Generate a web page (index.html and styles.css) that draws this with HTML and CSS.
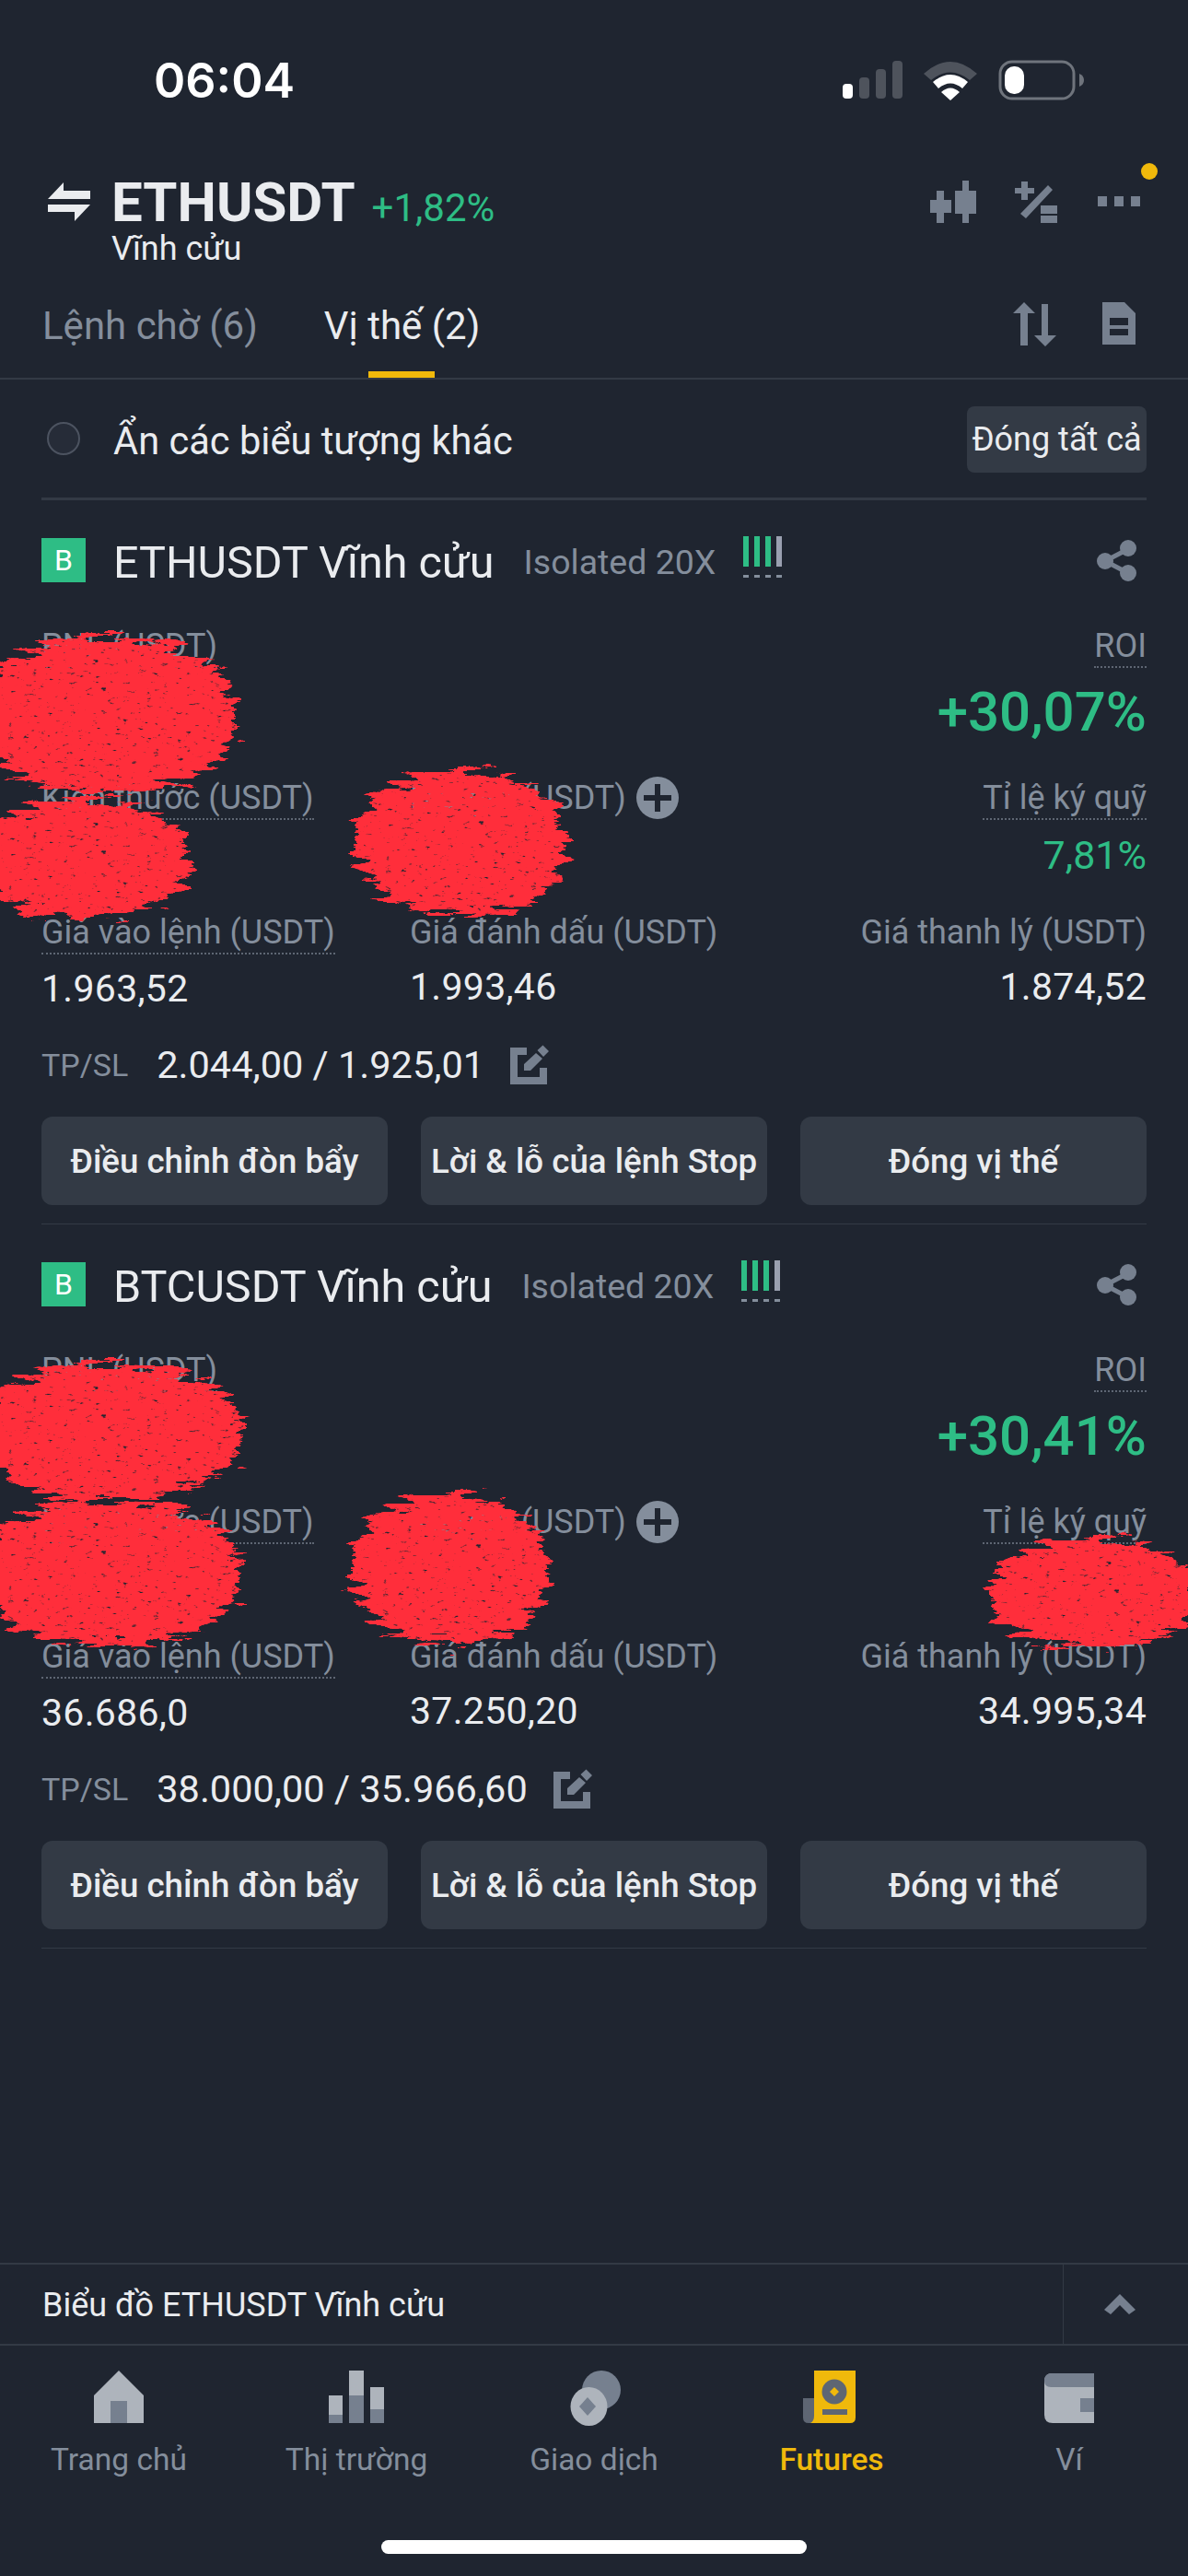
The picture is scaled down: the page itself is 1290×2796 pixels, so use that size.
FILE: index.html
```html
<!DOCTYPE html>
<html lang="vi">
<head>
  <meta charset="UTF-8">
  <title>ETHUSDT Vĩnh cửu</title>
  <link rel="stylesheet" href="styles.css">
</head>
<body>
  <svg class="defs" width="0" height="0">
    <filter id="scribble" x="-20%" y="-20%" width="140%" height="140%">
      <feTurbulence type="fractalNoise" baseFrequency="0.025 0.14" numOctaves="5" seed="7" result="warp"/>
      <feDisplacementMap in="SourceGraphic" in2="warp" scale="40" xChannelSelector="R" yChannelSelector="G" result="rough"/>
      <feTurbulence type="fractalNoise" baseFrequency="0.12 0.3" numOctaves="3" seed="3"/>
      <feColorMatrix type="matrix" values="0 0 0 0 0  0 0 0 0 0  0 0 0 0 0  6 0 0 0 -0.9"/>
      <feComposite in="rough" operator="in"/>
    </filter>
  </svg>

  <div class="phone">
    <div class="status-bar">
      <span class="clock">06:04</span>
      <div class="status-icons">
        <svg class="ic-signal" viewBox="0 0 65 41">
          <rect x="0" y="25" width="11" height="16" rx="4" fill="#fff"/>
          <rect x="18" y="18" width="11" height="23" rx="4" fill="#4e535c"/>
          <rect x="36" y="9" width="11" height="32" rx="4" fill="#4e535c"/>
          <rect x="54" y="0" width="11" height="41" rx="4" fill="#4e535c"/>
        </svg>
        <svg class="ic-wifi" viewBox="0 0 60 44">
          <path d="M1 15Q30 -11 59 15L51 22Q30 5 9 22Z" fill="#4e535c"/>
          <path d="M11 24Q30 8 49 24L43 31Q30 20 17 31Z" fill="#fff"/>
          <path d="M20 35Q30 26 40 35L30 44Z" fill="#fff"/>
        </svg>
        <svg class="ic-battery" viewBox="0 0 93 44">
          <rect x="2" y="2" width="80" height="40" rx="13" fill="none" stroke="#6f747c" stroke-width="3"/>
          <rect x="7" y="7" width="21" height="30" rx="10" fill="#fff"/>
          <path d="M88 15Q93 17 93 22Q93 27 88 29Z" fill="#6f747c"/>
        </svg>
      </div>
    </div>

    <header class="pair-bar">
      <svg class="ic-swap" viewBox="0 0 46 42">
        <path d="M0 18L17 0V9H46V18Z" fill="#eaecef"/>
        <path d="M0 24H46L29 42V32H0Z" fill="#eaecef"/>
      </svg>
      <div class="pair-name">
        <div class="pair-line">
          <span class="pair-symbol">ETHUSDT</span>
          <span class="pair-change">+1,82%</span>
        </div>
        <div class="pair-kind">Vĩnh cửu</div>
      </div>
      <div class="pair-tools">
        <svg class="tool-candle" viewBox="0 0 50 46">
          <path d="M0 21H7V11H15V21H23V35H15V46H7V35H0ZM27 11H35V0H42V11H50V36H42V46H35V36H27Z" fill="#76808f"/>
        </svg>
        <svg class="tool-percent" viewBox="0 0 46 46">
          <path d="M7 1H14V8H21V14H14V21H7V14H0V8H7ZM6 36L36 5L41 10L12 41ZM28 27H46V36H28ZM28 38H46V46H28Z" fill="#76808f"/>
        </svg>
        <div class="tool-more">
          <span></span><span></span><span></span>
          <i class="notice-dot"></i>
        </div>
      </div>
    </header>

    <nav class="tabs">
      <span class="tab">Lệnh chờ (6)</span>
      <span class="tab tab-active">Vị thế (2)</span>
      <div class="tab-tools">
        <svg class="tool-sort" viewBox="0 0 48 48">
          <path d="M12 0L24 12H16V47H8V12H0ZM31 2H38V36H47L35 48L23 36H31Z" fill="#76808f"/>
        </svg>
        <svg class="tool-doc" viewBox="0 0 36 46">
          <path d="M0 0H24L36 12V46H0ZM8 17V25H28V17ZM8 29V36H28V29Z" fill="#76808f" fill-rule="evenodd"/>
        </svg>
      </div>
    </nav>

    <div class="filter-row">
      <i class="radio"></i>
      <span class="filter-text">Ẩn các biểu tượng khác</span>
      <button class="close-all">Đóng tất cả</button>
    </div>

    <section class="position">
      <div class="pos-head">
        <span class="side-badge">B</span>
        <span class="pos-title">ETHUSDT Vĩnh cửu</span>
        <span class="pos-mode">Isolated 20X</span>
        <svg class="ic-risk" viewBox="0 0 43 46">
          <rect x="0" width="6" height="33" fill="#2ebd85"/>
          <rect x="12" width="6" height="33" fill="#2ebd85"/>
          <rect x="24" width="6" height="33" fill="#2ebd85"/>
          <rect x="36" width="6" height="33" fill="#9aa0b0"/>
          <path d="M0 42h6v3H0zM12 42h6v3h-6zM24 42h6v3h-6zM36 42h6v3h-6z" fill="#848e9c"/>
        </svg>
        <svg class="ic-share" viewBox="0 0 46 46">
          <path d="M35 10L10 23L35 36" fill="none" stroke="#76808f" stroke-width="5"/>
          <circle cx="35" cy="9" r="9" fill="#76808f"/>
          <circle cx="10" cy="23" r="9" fill="#76808f"/>
          <circle cx="35" cy="36" r="9" fill="#76808f"/>
        </svg>
      </div>

      <div class="metrics">
        <div class="metric row-a">
          <span class="label dotted">PNL (USDT)</span>
        </div>
        <div class="metric row-a"></div>
        <div class="metric row-a right">
          <span class="label dotted">ROI</span>
          <span class="roi">+30,07%</span>
        </div>

        <div class="metric row-b">
          <span class="label dotted">Kích thước (USDT)</span>
        </div>
        <div class="metric row-b">
          <span class="label-line">
            <span class="label">Margin (USDT)</span>
            <svg class="ic-plus" viewBox="0 0 46 46">
              <circle cx="23" cy="23" r="23" fill="#848e9c"/>
              <path d="M20 8h6v12h12v6H26v12h-6V26H8v-6h12z" fill="#1f2530"/>
            </svg>
          </span>
        </div>
        <div class="metric row-b right">
          <span class="label dotted">Tỉ lệ ký quỹ</span>
          <span class="ratio">7,81%</span>
        </div>

        <div class="metric row-c">
          <span class="label dotted">Giá vào lệnh (USDT)</span>
          <span class="value">1.963,52</span>
        </div>
        <div class="metric row-c">
          <span class="label">Giá đánh dấu (USDT)</span>
          <span class="value">1.993,46</span>
        </div>
        <div class="metric row-c right">
          <span class="label">Giá thanh lý (USDT)</span>
          <span class="value">1.874,52</span>
        </div>
      </div>

      <div class="tpsl">
        <span class="tpsl-label">TP/SL</span>
        <span class="tpsl-value">2.044,00 / 1.925,01</span>
        <svg class="ic-edit" viewBox="0 -3 42 44">
          <path d="M18 0H0V40H40V22H32V32H8V8H18ZM28 6L15 18V25H22L35 12ZM29.500 3L35.500 -2.500L42 4L36 10Z" fill="#76808f"/>
        </svg>
      </div>

      <div class="actions">
        <button>Điều chỉnh đòn bẩy</button>
        <button>Lời &amp; lỗ của lệnh Stop</button>
        <button>Đóng vị thế</button>
      </div>

      <div class="blob blob-a"></div>
      <div class="blob blob-b"></div>
      <div class="blob blob-c"></div>
    </section>

    <section class="position">
      <div class="pos-head">
        <span class="side-badge">B</span>
        <span class="pos-title">BTCUSDT Vĩnh cửu</span>
        <span class="pos-mode">Isolated 20X</span>
        <svg class="ic-risk" viewBox="0 0 43 46">
          <rect x="0" width="6" height="33" fill="#2ebd85"/>
          <rect x="12" width="6" height="33" fill="#2ebd85"/>
          <rect x="24" width="6" height="33" fill="#2ebd85"/>
          <rect x="36" width="6" height="33" fill="#9aa0b0"/>
          <path d="M0 42h6v3H0zM12 42h6v3h-6zM24 42h6v3h-6zM36 42h6v3h-6z" fill="#848e9c"/>
        </svg>
        <svg class="ic-share" viewBox="0 0 46 46">
          <path d="M35 10L10 23L35 36" fill="none" stroke="#76808f" stroke-width="5"/>
          <circle cx="35" cy="9" r="9" fill="#76808f"/>
          <circle cx="10" cy="23" r="9" fill="#76808f"/>
          <circle cx="35" cy="36" r="9" fill="#76808f"/>
        </svg>
      </div>

      <div class="metrics">
        <div class="metric row-a">
          <span class="label dotted">PNL (USDT)</span>
        </div>
        <div class="metric row-a"></div>
        <div class="metric row-a right">
          <span class="label dotted">ROI</span>
          <span class="roi">+30,41%</span>
        </div>

        <div class="metric row-b">
          <span class="label dotted">Kích thước (USDT)</span>
        </div>
        <div class="metric row-b">
          <span class="label-line">
            <span class="label">Margin (USDT)</span>
            <svg class="ic-plus" viewBox="0 0 46 46">
              <circle cx="23" cy="23" r="23" fill="#848e9c"/>
              <path d="M20 8h6v12h12v6H26v12h-6V26H8v-6h12z" fill="#1f2530"/>
            </svg>
          </span>
        </div>
        <div class="metric row-b right">
          <span class="label dotted">Tỉ lệ ký quỹ</span>
        </div>

        <div class="metric row-c">
          <span class="label dotted">Giá vào lệnh (USDT)</span>
          <span class="value">36.686,0</span>
        </div>
        <div class="metric row-c">
          <span class="label">Giá đánh dấu (USDT)</span>
          <span class="value">37.250,20</span>
        </div>
        <div class="metric row-c right">
          <span class="label">Giá thanh lý (USDT)</span>
          <span class="value">34.995,34</span>
        </div>
      </div>

      <div class="tpsl">
        <span class="tpsl-label">TP/SL</span>
        <span class="tpsl-value">38.000,00 / 35.966,60</span>
        <svg class="ic-edit" viewBox="0 -3 42 44">
          <path d="M18 0H0V40H40V22H32V32H8V8H18ZM28 6L15 18V25H22L35 12ZM29.500 3L35.500 -2.500L42 4L36 10Z" fill="#76808f"/>
        </svg>
      </div>

      <div class="actions">
        <button>Điều chỉnh đòn bẩy</button>
        <button>Lời &amp; lỗ của lệnh Stop</button>
        <button>Đóng vị thế</button>
      </div>

      <div class="blob blob-d"></div>
      <div class="blob blob-e"></div>
      <div class="blob blob-f"></div>
      <div class="blob blob-g"></div>
    </section>

    <div class="chart-bar">
      <span class="chart-title">Biểu đồ ETHUSDT Vĩnh cửu</span>
      <div class="chart-toggle">
        <svg class="ic-chevron" viewBox="0 0 36 22">
          <path d="M18 0L35 17L28 22L18 12L8 22L1 17Z" fill="#76808f"/>
        </svg>
      </div>
    </div>

    <nav class="bottom-nav">
      <div class="nav-item">
        <svg viewBox="0 0 78 60">
          <path d="M12 27L39 0L66 27V57H12Z" fill="#aeb4bc"/>
          <rect x="30" y="33" width="18" height="24" fill="#76808f"/>
        </svg>
        <span>Trang chủ</span>
      </div>
      <div class="nav-item">
        <svg viewBox="0 0 78 60">
          <rect x="9" y="27" width="15" height="21" fill="#aeb4bc"/>
          <rect x="9" y="48" width="15" height="9" fill="#76808f"/>
          <rect x="31" y="0" width="16" height="27" fill="#aeb4bc"/>
          <rect x="31" y="27" width="16" height="30" fill="#76808f"/>
          <rect x="54" y="18" width="15" height="24" fill="#aeb4bc"/>
          <rect x="54" y="42" width="15" height="15" fill="#76808f"/>
        </svg>
        <span>Thị trường</span>
      </div>
      <div class="nav-item">
        <svg viewBox="0 0 78 60">
          <circle cx="47" cy="21" r="21" fill="#76808f"/>
          <ellipse cx="33.500" cy="39" rx="20" ry="21" fill="#aeb4bc"/>
          <path d="M32 29L41 39L32 49L23 39Z" fill="#76808f"/>
        </svg>
        <span>Giao dịch</span>
      </div>
      <div class="nav-item nav-active">
        <svg viewBox="0 0 78 60">
          <path d="M8 30H20V57H14Q8 57 8 51Z" fill="#5e6673"/>
          <path d="M20 0H65V51Q65 57 59 57H16Q20 55 20 49Z" fill="#f0b90b"/>
          <circle cx="42" cy="23" r="13.500" fill="#5e6673"/>
          <path d="M42 18L47 23L42 28L37 23Z" fill="#f0b90b"/>
          <rect x="29" y="42" width="27" height="6" fill="#5e6673"/>
        </svg>
        <span>Futures</span>
      </div>
      <div class="nav-item">
        <svg viewBox="0 0 78 60">
          <path d="M12 12Q12 3 21 3H66V57H21Q12 57 12 48Z" fill="#aeb4bc"/>
          <path d="M12 11Q12 3 20 3H66V18H19Q12 18 12 11Z" fill="#76808f"/>
          <rect x="51" y="30" width="15" height="15" fill="#76808f"/>
        </svg>
        <span>Ví</span>
      </div>
    </nav>

    <div class="home-bar"><i></i></div>
  </div>
</body>
</html>
```

FILE: styles.css
```css
* {
  box-sizing: border-box;
}

html, body {
  margin: 0;
  padding: 0;
  background-color: #1f2530;
}

body {
  font-family: Roboto, "Noto Sans", sans-serif;
  color: #eaecef;
}

.defs {
  position: absolute;
}

.phone {
  width: 1290px;
  height: 2796px;
  display: flex;
  flex-direction: column;
  overflow: hidden;
}

svg {
  display: block;
  flex: none;
}

/* status bar */
.status-bar {
  height: 170px;
  display: flex;
  padding: 56px 113px 0 167px;
  justify-content: space-between;
}

.clock {
  font-family: Inter, sans-serif;
  font-size: 52px;
  line-height: 64px;
  font-weight: 600;
  color: #fff;
}

.status-icons {
  display: flex;
  gap: 22px;
  align-items: flex-start;
  padding-top: 9px;
}

.ic-signal {
  width: 65px;
  height: 41px;
  margin-top: 1px;
}

.ic-wifi {
  width: 60px;
  height: 44px;
}

.ic-battery {
  width: 93px;
  height: 44px;
}

/* pair header */
.pair-bar {
  height: 130px;
  display: flex;
  padding: 28px 52px 0 52px;
  align-items: flex-start;
  position: relative;
}

.ic-swap {
  width: 46px;
  height: 42px;
  margin-right: 23px;
}

.pair-name {
  flex: 1;
  margin-top: -9px;
}

.pair-line {
  display: flex;
  align-items: baseline;
  gap: 18px;
}

.pair-symbol {
  font-size: 60px;
  line-height: 61px;
  font-weight: 700;
}

.pair-change {
  font-size: 42px;
  line-height: 48px;
  color: #2ebd85;
}

.pair-kind {
  font-size: 36px;
  line-height: 40px;
}

.pair-tools {
  display: flex;
  margin-top: -2px;
}

.tool-candle, .tool-percent {
  width: 50px;
  height: 46px;
}

.tool-percent {
  width: 46px;
  margin-left: 42px;
}

.tool-more {
  width: 46px;
  height: 46px;
  display: flex;
  gap: 8px;
  margin-left: 44px;
  padding-top: 17px;
  position: relative;
}

.tool-more span {
  width: 10px;
  height: 11px;
  background-color: #76808f;
}

.notice-dot {
  position: absolute;
  top: -19px;
  right: -19px;
  width: 18px;
  height: 18px;
  border-radius: 50%;
  background-color: #f0b90b;
}

/* tabs */
.tabs {
  height: 112px;
  display: flex;
  padding: 0 57px 0 46px;
  border-bottom: 2px solid #333a45;
  gap: 72px;
}

.tab {
  font-size: 42px;
  line-height: 56px;
  padding-top: 26px;
  height: 110px;
  color: #848e9c;
  position: relative;
}

.tab-active {
  color: #eaecef;
}

.tab-active::after {
  content: "";
  position: absolute;
  left: 48px;
  bottom: 0;
  width: 72px;
  height: 7px;
  background-color: #f0b90b;
}

.tab-tools {
  margin-left: auto;
  display: flex;
  gap: 49px;
  padding-top: 28px;
}

.tool-sort {
  width: 48px;
  height: 48px;
}

.tool-doc {
  width: 36px;
  height: 46px;
}

/* filter row */
.filter-row {
  height: 131px;
  margin: 0 45px;
  display: flex;
  align-items: center;
  border-bottom: 3px solid #333a45;
}

.radio {
  width: 36px;
  height: 36px;
  margin-left: 6px;
  border-radius: 50%;
  border: 2px solid #4c5360;
  background-color: #262c38;
}

.filter-text {
  margin-left: 36px;
  flex: 1;
  font-size: 41.6px;
  padding-top: 4px;
}

.close-all {
  width: 195px;
  height: 72px;
  margin-top: 2px;
  padding: 0;
  border: none;
  border-radius: 8px;
  background-color: #333a45;
  color: #eaecef;
  font: inherit;
  font-size: 36px;
}

/* position card */
.position {
  height: 786px;
  margin: 0 45px;
  padding-bottom: 20px;
  border-bottom: 1px solid #333a45;
  position: relative;
  display: flex;
  flex-direction: column;
}

.pos-head {
  height: 130px;
  display: flex;
  align-items: center;
}

.side-badge {
  width: 48px;
  height: 48px;
  background-color: #2ebd85;
  color: #fff;
  font-size: 32px;
  line-height: 48px;
  text-align: center;
}

.pos-title {
  margin-left: 30px;
  margin-top: 4px;
  font-size: 48.500px;
}

.pos-mode {
  margin-left: 32px;
  margin-top: 4px;
  font-size: 37.500px;
  color: #848e9c;
}

.ic-risk {
  width: 43px;
  height: 46px;
  margin-left: 30px;
  margin-bottom: 6px;
}

.ic-share {
  width: 46px;
  height: 46px;
  margin-left: auto;
  margin-right: 9px;
  margin-top: 2px;
}

.metrics {
  display: grid;
  grid-template-columns: 400px 1fr auto;
  grid-template-rows: 167px 145px 130px;
}

.metric {
  display: flex;
  flex-direction: column;
  align-items: flex-start;
}

.metric.right {
  align-items: flex-end;
}

.row-a {
  padding-top: 6px;
}

.row-b {
  padding-top: 4px;
}

.row-c {
  padding-top: 5px;
}

.label {
  font-size: 36px;
  line-height: 44px;
  color: #848e9c;
}

.dotted {
  border-bottom: 2px dotted #5e6673;
}

.label-line {
  display: flex;
  align-items: center;
  gap: 11px;
  margin-top: -1px;
}

.ic-plus {
  width: 46px;
  height: 46px;
}

.roi {
  font-size: 60px;
  line-height: 70px;
  font-weight: 500;
  color: #2ebd85;
  margin-top: 13px;
}

.ratio {
  font-size: 43px;
  line-height: 48px;
  color: #2ebd85;
  margin-top: 14px;
}

.value {
  font-size: 41px;
  line-height: 48px;
  letter-spacing: 0.300px;
  margin-top: 13px;
}

.tpsl {
  height: 97px;
  display: flex;
  align-items: center;
  padding-bottom: 16px;
}

.tpsl-label {
  font-size: 34px;
  color: #848e9c;
}

.tpsl-value {
  margin-left: 31px;
  font-size: 41.500px;
}

.ic-edit {
  width: 42px;
  height: 44px;
  margin-left: 28px;
}

.actions {
  display: grid;
  grid-template-columns: repeat(3, 1fr);
  gap: 36px;
}

.actions button {
  height: 96px;
  padding: 0;
  border: none;
  border-radius: 12px;
  background-color: #333a45;
  color: #eaecef;
  font: inherit;
  font-size: 36.700px;
  font-weight: 500;
}

/* scribbles over the hidden numbers */
.blob {
  position: absolute;
  background-color: #ff2d3b;
  border-radius: 46%;
  filter: url(#scribble);
}

.blob-a { left: -70px; top: 150px; width: 280px; height: 168px; }
.blob-b { left: -70px; top: 327px; width: 232px; height: 125px; }
.blob-c { left: 340px; top: 295px; width: 230px; height: 155px; }
.blob-d { left: -70px; top: 153px; width: 287px; height: 145px; }
.blob-e { left: -70px; top: 301px; width: 285px; height: 155px; }
.blob-f { left: 337px; top: 294px; width: 213px; height: 161px; }
.blob-g { left: 1030px; top: 343px; width: 225px; height: 116px; }

/* bottom */
.chart-bar {
  margin-top: auto;
  height: 90px;
  display: flex;
  border-top: 2px solid #333a45;
  border-bottom: 2px solid #333a45;
}

.chart-title {
  flex: 1;
  padding-left: 46px;
  padding-top: 3px;
  font-size: 36px;
  line-height: 83px;
}

.chart-toggle {
  width: 136px;
  border-left: 1px solid #333a45;
  padding: 32px 0 0 43px;
}

.ic-chevron {
  width: 36px;
  height: 22px;
}

.bottom-nav {
  height: 205px;
  display: grid;
  grid-template-columns: repeat(5, 258px);
  padding-top: 27px;
}

.nav-item {
  display: flex;
  flex-direction: column;
  align-items: center;
  color: #848e9c;
  font-size: 33.500px;
}

.nav-item svg {
  width: 78px;
  height: 60px;
  margin-bottom: 17px;
}

.nav-active {
  color: #f0b90b;
  font-weight: 500;
}

.home-bar {
  height: 45px;
  display: flex;
  justify-content: center;
  padding-top: 6px;
}

.home-bar i {
  width: 462px;
  height: 15px;
  border-radius: 8px;
  background-color: #fff;
}
```
